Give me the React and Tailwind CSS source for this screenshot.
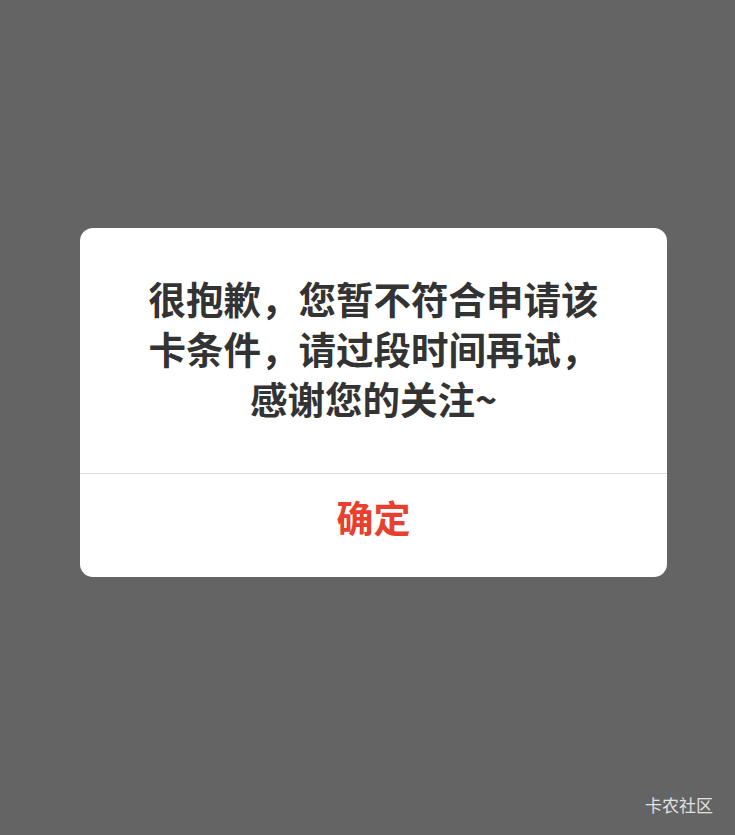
export default function App() {
  const font = { fontFamily: '"Noto Sans CJK SC", "Noto Sans", sans-serif' };
  return (
    <div className="relative w-[735px] h-[835px] bg-[#646464] overflow-hidden" style={font}>
      <div className="pt-[228px] pl-[80px]">
        <div className="w-[587px] bg-white rounded-[13px] overflow-hidden">
          <div className="pt-[45px] pb-[50px] flex flex-col items-center text-[37.5px] leading-[50px] font-bold text-[#333333]">
            <div>很抱歉，您暂不符合申请该</div>
            <div>卡条件，请过段时间再试，</div>
            <div>感谢您的关注~</div>
          </div>
          <div className="h-px bg-[#dcdcdc]"></div>
          <div className="h-[103px] pt-[18px] flex justify-center text-[37px] leading-[50px] font-bold text-[#e8402f]">
            确定
          </div>
        </div>
      </div>
      <div className="absolute right-[22px] bottom-[20px] text-[17px] leading-[20px] text-[#e2e2e2]">
        卡农社区
      </div>
    </div>
  );
}
